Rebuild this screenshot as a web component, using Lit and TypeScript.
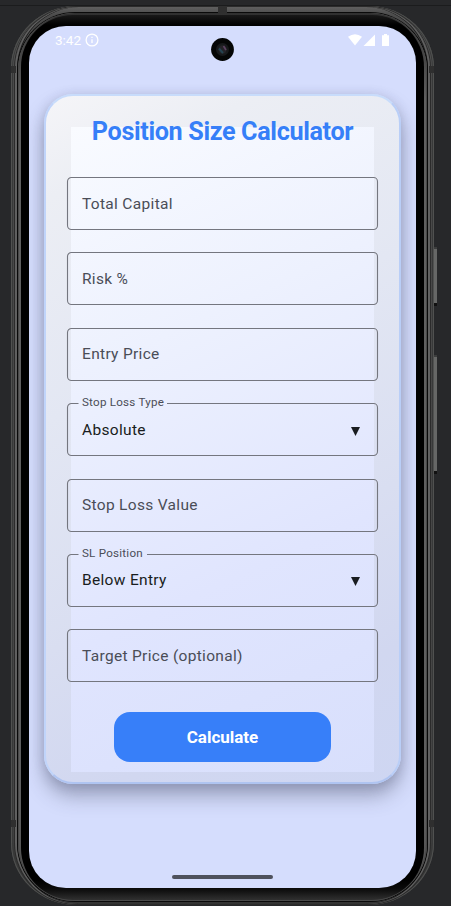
import { LitElement, html, css, svg } from "lit";
import { customElement, property } from "lit/decorators.js";

@customElement("outlined-field")
class OutlinedField extends LitElement {
  @property() label = "";
  @property() value = "";

  static styles = css`
    :host { display: block; height: 53px; }
    .field {
      box-sizing: border-box; height: 100%; margin: 0; min-width: 0; padding: 0 14px;
      position: relative; display: flex; align-items: center; justify-content: space-between;
      font: 15.5px Roboto, sans-serif; letter-spacing: 0.32px; color: #4a4d57;
    }
    .outline { position: absolute; inset: 0; width: 100%; height: 100%; overflow: visible; }
    .outline path { fill: none; stroke: #74767f; stroke-width: 1.1; }
    .text { padding-left: 1px; line-height: 20px; }
    .value { color: #191c20; }
    .label {
      position: absolute; left: 15px; top: -9px; line-height: 16px;
      font-size: 11.6px; letter-spacing: 0.24px; white-space: nowrap;
    }
    .arrow { width: 9px; height: 9px; margin-right: 4px; margin-top: 3px; fill: #191c20; }
  `;

  private outline() {
    if (!this.value) {
      return svg`<path d="M4.5 .5H306.5a4 4 0 0 1 4 4V48.5a4 4 0 0 1-4 4H4.5a4 4 0 0 1-4-4V4.5a4 4 0 0 1 4-4Z"/>`;
    }
    return this.label === "SL Position"
      ? svg`<path d="M80 .5H306.5a4 4 0 0 1 4 4V48.5a4 4 0 0 1-4 4H4.5a4 4 0 0 1-4-4V4.5a4 4 0 0 1 4-4H11.5"/>`
      : svg`<path d="M100 .5H306.5a4 4 0 0 1 4 4V48.5a4 4 0 0 1-4 4H4.5a4 4 0 0 1-4-4V4.5a4 4 0 0 1 4-4H11.5"/>`;
  }

  render() {
    return html`<div class="field">
      <svg class="outline">${this.outline()}</svg>
      ${this.value
        ? html`<span class="label">${this.label}</span>
            <span class="text value">${this.value}</span>
            <svg class="arrow" viewBox="0 0 9 9"><path d="M0 0H9L4.5 9Z" /></svg>`
        : html`<span class="text">${this.label}</span>`}
    </div>`;
  }
}

@customElement("app-root")
class AppRoot extends LitElement {
  static styles = css`
    :host {
      display: block; position: relative; width: 451px; height: 906px; overflow: hidden;
      box-sizing: border-box; padding: 6px 0 0 11px; background: #27282a;
      font-family: Roboto, sans-serif;
    }
    .rule { position: absolute; left: 0; right: 0; top: 5px; height: 1px; background: #1b1c1d; }
    .phone, .rail, .bezel, .screen { box-sizing: border-box; }
    .phone {
      position: relative; width: 423px; height: 899px; border-radius: 65px / 62px; padding: 1px 4px;
      background: linear-gradient(#606060, #4a4a4a 8%, #444 90%, #2b2b2b);
      box-shadow: inset 0 0 0 1px #505150, inset 2px 0 0 #383939, inset -2px 0 0 #383939;
    }
    .rail {
      height: 897px; border-radius: 61px; padding: 6px 3px 3px;
      background: linear-gradient(#5f5f5f 0, #4c4c4c 8px, #4c4c4c 90%, #333);
      box-shadow: inset 2px 0 0 #606060, inset -2px 0 0 #606060, inset 3px 0 0 #1a1a1a, inset -3px 0 0 #1a1a1a, 0 0 0 1px #2b2b2b;
    }
    .rim {
      box-sizing: border-box; height: 888px; border-radius: 57px; padding: 2px 3px;
      background: linear-gradient(#303030, #606060 10%, #5e5e5e 90%, #4a4a4a);
      box-shadow: 0 0 0 1px #0a0a0a, inset 1px 0 0 #484848, inset -1px 0 0 #484848;
    }
    .bezel {
      height: 885px; border-radius: 52px; padding: 11px 8px 0;
      background: linear-gradient(#191919 0, #000 10px, #000 865px, #0b0b0b 874px, #303030 885px);
    }
    .screen {
      position: relative; width: 387px; height: 862px; margin: 0; overflow: hidden;
      border-radius: 37px; background: #d5ddfd;
    }
    .notch { position: absolute; background: #2f2f2f; width: 5px; height: 7px; }
    .notch.tl { left: 0; top: 60px; } .notch.tr { right: 0; top: 60px; }
    .notch.bl { left: 0; top: 814px; } .notch.br { right: 0; top: 814px; }
    .notch.top { left: 207px; top: 0; width: 9px; }
    .key {
      position: absolute; left: 434px; width: 3px; background: #666766;
      border-bottom: 3px solid #111; border-top: 2px solid #3c3d3d;
    }
    .power { top: 247px; height: 54px; }
    .volume { top: 355px; height: 114px; }
    .status {
      height: 27px; padding: 0 26px; display: flex; align-items: center; color: #fff;
      font-size: 13.6px; letter-spacing: -0.05px;
    }
    .info { width: 14px; height: 14px; margin-left: 4px; fill: none; stroke: #fff; stroke-width: 1.3; }
    .signals { margin-left: auto; width: 42px; height: 14px; fill: #fff; }
    .camera { position: absolute; left: 182px; top: 12px; width: 23px; height: 23px; }
    .card {
      box-sizing: border-box; width: 357px; height: 690px; margin: 41px 0 0 15px;
      border: 2px solid #b9cef7; border-color: #c8dcfb #b9cef7 #afc4f1 #c0d4fa; border-radius: 29px;
      padding: 31px 25px 10px;
      background: linear-gradient(154deg, #f5f5f8 0, #eceef4 12%, #e3e7f3 38%, #d9def1 65%, #d1d7f0 84%, #ced6f2 100%);
      box-shadow: 0 12px 20px rgba(60, 65, 90, 0.38), 0 2px 12px rgba(65, 70, 110, 0.2);
    }
    .sheet {
      box-sizing: border-box; height: 645px; margin-top: 0; display: flex; flex-direction: column; align-items: center;
      background: linear-gradient(155deg, #f9fbff 0, #edf1fe 32%, #e0e5fe 67%, #d8dffc 100%);
    }
    h1 {
      margin: -10px 0 0; height: 29px; line-height: 29px; font-size: 25.2px; font-weight: 700;
      letter-spacing: -0.36px; white-space: nowrap; color: #367ff8;
    }
    .form { width: 311px; margin-top: 31px; display: grid; row-gap: 22.4px; }
    button {
      width: 217px; height: 50px; flex: none; margin-top: 30px; padding: 0; border: 0; border-radius: 16px;
      background: #377ff9; color: #fff; font: 700 17px Roboto, sans-serif;
    }
    .home {
      position: absolute; left: 143px; bottom: 9px; width: 101px; height: 4px;
      border-radius: 2px; background: #4e515d;
    }
  `;

  private fields = [
    ["Total Capital", ""],
    ["Risk %", ""],
    ["Entry Price", ""],
    ["Stop Loss Type", "Absolute"],
    ["Stop Loss Value", ""],
    ["SL Position", "Below Entry"],
    ["Target Price (optional)", ""],
  ];

  render() {
    return html`
      <div class="rule"></div>
      <div class="key power"></div>
      <div class="key volume"></div>
      <div class="phone">
        <div class="rail"><div class="rim"><div class="bezel"><main class="screen">
          <div class="status">
            <span>3:42</span>
            <svg class="info" viewBox="0 0 14 14"><circle cx="7" cy="7" r="5.9" /><path d="M7 6.2V10M7 3.8V5.1" /></svg>
            <svg class="signals" viewBox="0 0 42 14">
              <path d="M0 3.8Q7 -1.4 14 3.8L7 12.6Z" />
              <path d="M27 1.5V13H15.5Z" />
              <path d="M34 2.2H36V1H39V2.2H41V13H34Z" />
            </svg>
          </div>
          <svg class="camera" viewBox="0 0 23 23">
            <circle cx="11.5" cy="11.5" r="11.4" fill="#050606" />
            <circle cx="11.5" cy="11.5" r="6.5" fill="#17191b" />
            <circle cx="11.5" cy="11.5" r="4.2" fill="#252328" />
            <path d="M8 10.5L12 15" stroke="#244451" stroke-width="2" />
            <path d="M12.5 8L15 12" stroke="#5d4261" stroke-width="1.6" />
          </svg>
          <section class="card">
            <div class="sheet">
              <h1>Position Size Calculator</h1>
              <div class="form">
                ${this.fields.map(([l, v]) => html`<outlined-field .label=${l} .value=${v}></outlined-field>`)}
              </div>
              <button>Calculate</button>
            </div>
          </section>
          <div class="home"></div>
        </main></div></div></div>
        <i class="notch tl"></i><i class="notch tr"></i>
        <i class="notch bl"></i><i class="notch br"></i><i class="notch top"></i>
      </div>
    `;
  }
}
